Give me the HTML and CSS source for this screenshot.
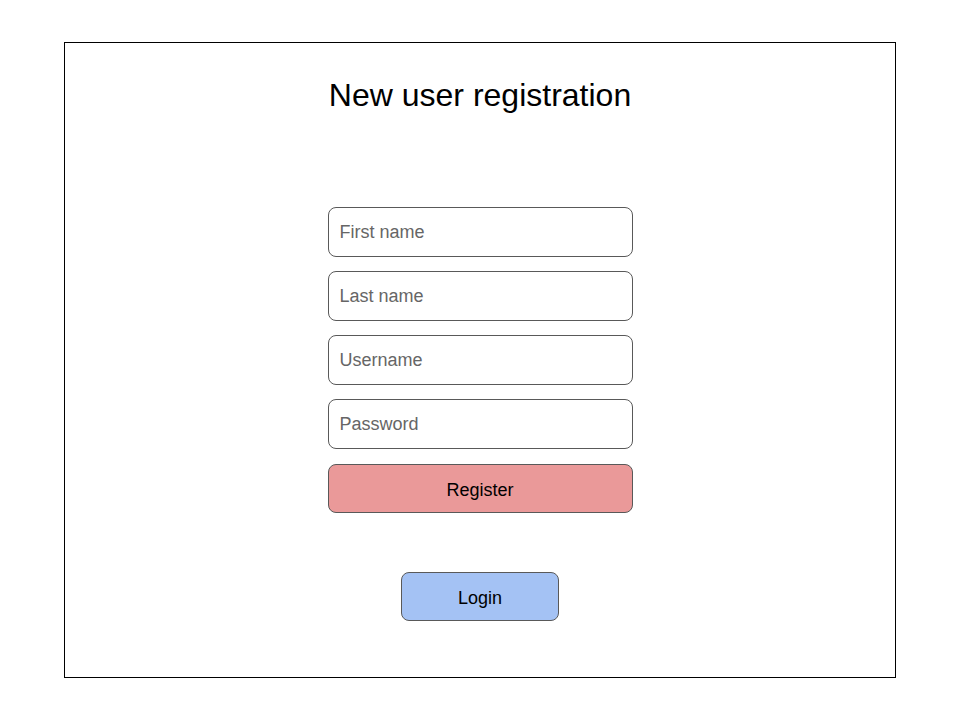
FILE: index.html
```html
<!DOCTYPE html>
<html>
<head>
<meta charset="utf-8">
<link rel="stylesheet" href="styles.css">
</head>
<body>
<div class="frame">
  <h1 class="title">New user registration</h1>
  <form class="form">
    <div class="field">First name</div>
    <div class="field">Last name</div>
    <div class="field">Username</div>
    <div class="field">Password</div>
    <div class="btn register">Register</div>
  </form>
  <div class="btn login">Login</div>
</div>
</body>
</html>
```
FILE: styles.css
```css
html, body {
  margin: 0;
  padding: 0;
  background: #fff;
}
body {
  font-family: "Liberation Sans", Arial, sans-serif;
}
.frame {
  box-sizing: border-box;
  margin: 42px 0 0 64px;
  width: 832px;
  height: 636px;
  border: 1px solid #000;
  display: flex;
  flex-direction: column;
  align-items: center;
}
.title {
  margin: 34px 0 0 0;
  font-size: 32px;
  font-weight: normal;
  line-height: 37px;
  color: #000;
}
.form {
  margin-top: 93px;
  display: flex;
  flex-direction: column;
  gap: 14px;
  width: 305px;
}
.field {
  box-sizing: border-box;
  height: 50px;
  border: 1px solid #595959;
  border-radius: 8px;
  padding: 1px 11px 0;
  display: flex;
  align-items: center;
  font-size: 18px;
  color: #666;
}
.btn {
  box-sizing: border-box;
  height: 49px;
  border: 1px solid #595959;
  border-radius: 8px;
  padding-top: 3px;
  display: flex;
  align-items: center;
  justify-content: center;
  font-size: 18px;
  color: #000;
}
.register {
  margin-top: 1px;
  background: #ea9999;
}
.login {
  margin-top: 59px;
  width: 158px;
  height: 49px;
  background: #a4c2f4;
}
```
